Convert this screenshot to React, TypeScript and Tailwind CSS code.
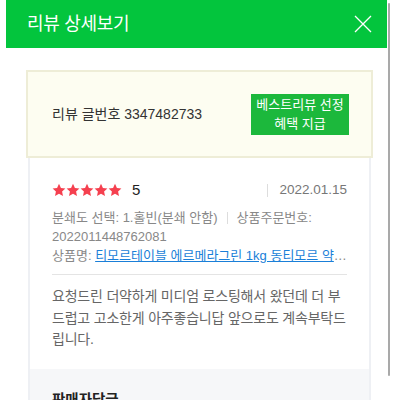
import React from "react";

const FONT = '"Liberation Sans", "Noto Sans CJK KR", sans-serif';

function Star() {
  return (
    <svg width="14" height="14" viewBox="0 0 24 23" className="shrink-0">
      <path
        d="M12 0.8l3.3 7.1 7.7 0.9-5.7 5.3 1.5 7.7L12 17.9l-6.8 3.9 1.5-7.7L1 8.8l7.7-0.9z"
        fill="#f5404f"
      />
    </svg>
  );
}

export default function App() {
  return (
    <div
      className="relative w-[400px] h-[400px] overflow-hidden bg-white"
      style={{ fontFamily: FONT }}
    >
      {/* header */}
      <div className="ml-[6px] w-[381px] h-[48px] bg-[#03c53d] flex items-center justify-between pl-[21px] pr-[14px]">
        <span className="text-white text-[18px] tracking-[-0.3px]">리뷰 상세보기</span>
        <svg width="20" height="20" viewBox="0 0 20 20">
          <path d="M2 2L18 18M18 2L2 18" stroke="#ffffff" strokeWidth="1.3" />
        </svg>
      </div>

      {/* scrollbar */}
      <div className="absolute left-[388px] top-[3px] w-[2px] h-[373px] bg-[#a9a9a9] rounded-full" />

      <div className="ml-[26px] w-[347px] pt-[22px]">
        {/* review number box */}
        <div className="h-[88px] border-2 border-[#eeedd7] bg-[#fdfdf1] flex items-center justify-between pl-[24px] pr-[22px]">
          <span className="text-[14px] text-[#333]">리뷰 글번호 3347482733</span>
          <div className="w-[98px] h-[41px] bg-[#1cb83c] flex flex-col items-center justify-center text-white text-[13px] leading-[19px]">
            <span>베스트리뷰 선정</span>
            <span>혜택 지급</span>
          </div>
        </div>

        {/* review card */}
        <div className="mx-[2px] border-x-2 border-[#eef0f4]">
          <div className="px-[22px] pt-[22px]">
            <div className="flex items-center h-[20px]">
              <div className="flex">
                <Star />
                <Star />
                <Star />
                <Star />
                <Star />
              </div>
              <span className="ml-[10px] text-[15px] text-[#222]">5</span>
              <span className="ml-auto flex items-center text-[13.5px] text-[#777]">
                <span className="w-px h-[13px] bg-[#ddd] mr-[11px]" />
                2022.01.15
              </span>
            </div>
            <div className="mt-[8px] text-[13px] leading-[19px] text-[#888]">
              <div className="flex items-center">
                분쇄도 선택: 1.홀빈(분쇄 안함)
                <span className="w-px h-[12px] bg-[#ddd] mx-[9px]" />
                상품주문번호:
              </div>
              <div>2022011448762081</div>
              <div className="truncate">
                상품명:{" "}
                <span className="text-[#1a7fd8] underline">
                  티모르테이블 에르메라그린 1kg 동티모르 약배전 원두커피
                </span>
              </div>
            </div>
            <div className="mt-[9px] h-px bg-[#e4e4e4]" />
            <p className="mt-[11px] pb-[18px] text-[14px] leading-[21.5px] text-[#666] tracking-[-0.2px] break-all">
              요청드린 더약하게 미디엄 로스팅해서 왔던데 더 부드럽고 고소한게 아주좋습니답 앞으로도 계속부탁드립니다.
            </p>
          </div>
          <div className="bg-[#f6f7f9] px-[22px] pt-[19px] pb-[20px]">
            <span className="text-[14.5px] font-bold text-[#222]">판매자답글</span>
          </div>
        </div>
      </div>
    </div>
  );
}
